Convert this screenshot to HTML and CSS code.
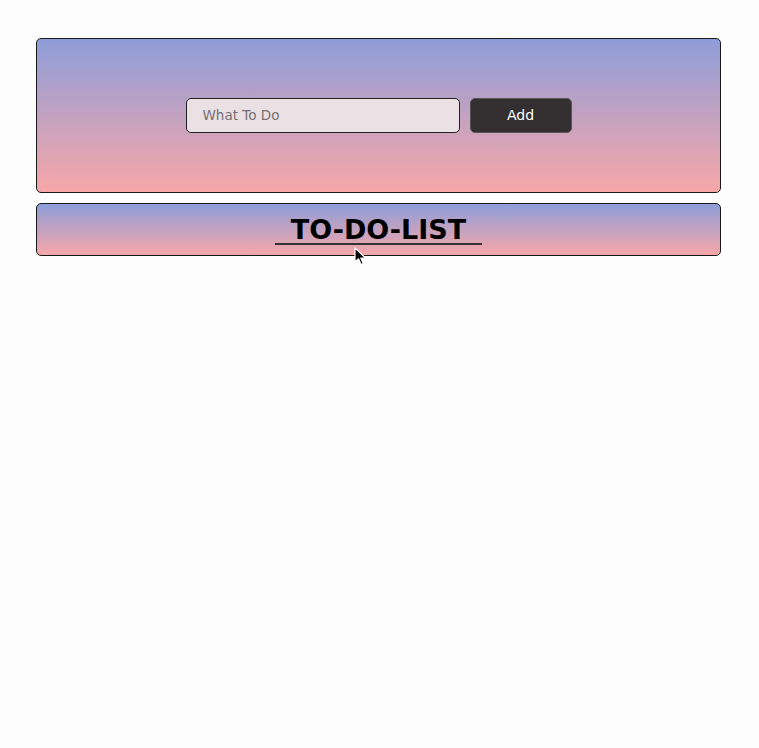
FILE: index.html
```html
<!DOCTYPE html>
<html>
<head>
<meta charset="utf-8">
<link rel="stylesheet" href="styles.css">
</head>
<body>
<div class="page">
  <div class="card form-card">
    <input class="task-input" type="text" placeholder="What To Do">
    <button class="add-btn">Add</button>
  </div>
  <div class="card title-card">
    <h1 class="title">TO-DO-LIST</h1>
  </div>
</div>
<svg class="cursor" width="14" height="20" viewBox="0 0 14 20"><path d="M1 1 L1 15 L4.5 11.8 L7 17.5 L9.2 16.5 L6.8 11 L11.5 11 Z" fill="#000" stroke="#fff" stroke-width="1.2" stroke-linejoin="round"/></svg>
</body>
</html>
```
FILE: styles.css
```css
html, body {
  margin: 0;
  padding: 0;
  background: #fdfdfd;
  font-family: "DejaVu Sans", Verdana, sans-serif;
}
.page {
  padding: 38px 38px 0 36px;
  display: flex;
  flex-direction: column;
  gap: 10px;
}
.card {
  border: 1px solid #1a1a1a;
  border-radius: 5px;
  background: linear-gradient(to bottom, #8e9dd9, #f7a7a8);
}
.form-card {
  height: 155px;
  display: flex;
  align-items: center;
  justify-content: center;
  gap: 10px;
  padding-bottom: 1px;
  box-sizing: border-box;
}
.task-input {
  width: 274px;
  height: 35px;
  box-sizing: border-box;
  border: 1px solid #222;
  border-radius: 5px;
  background: #ebe1e4;
  padding: 0 16px;
  font-family: "DejaVu Sans", Verdana, sans-serif;
  font-size: 13.5px;
  color: #333;
  outline: none;
}
.task-input::placeholder {
  color: #767075;
}
.add-btn {
  width: 102px;
  height: 35px;
  border: 1px solid #555;
  border-radius: 5px;
  background: #332f30;
  color: #fff;
  font-family: "DejaVu Sans", Verdana, sans-serif;
  font-size: 14px;
}
.title-card {
  height: 53px;
  box-sizing: border-box;
  display: flex;
  justify-content: center;
  padding-top: 11px;
}
.title {
  margin: 0;
  height: 28px;
  padding: 0 16px;
  font-size: 27px;
  line-height: 30px;
  font-weight: bold;
  color: #000;
  border-bottom: 2px solid #333;
}
.cursor {
  position: absolute;
  left: 354px;
  top: 247px;
}
```
